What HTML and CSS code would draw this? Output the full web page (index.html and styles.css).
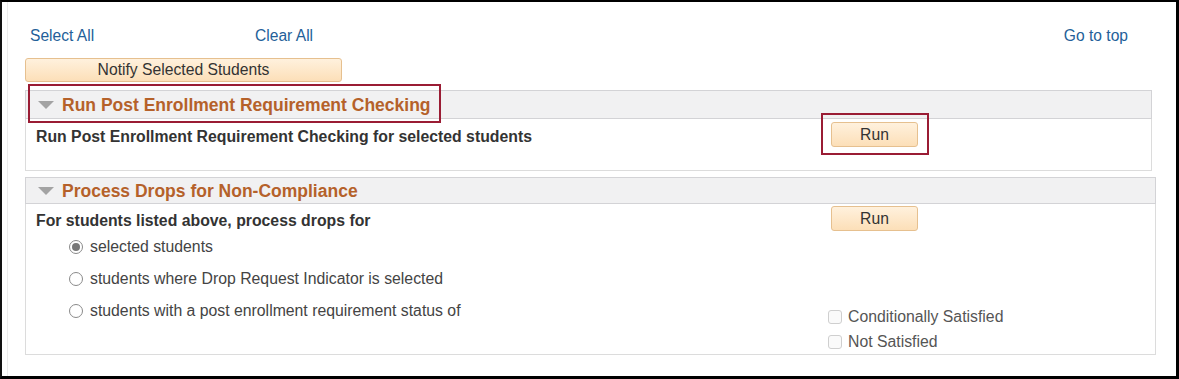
FILE: index.html
```html
<!DOCTYPE html>
<html lang="en">
<head>
<meta charset="utf-8">
<title>Post Enrollment Requirements</title>
<link rel="stylesheet" href="styles.css">
</head>
<body>
<div class="frame">
  <div class="page">
    <div class="links">
      <span class="link-cell"><a class="link" href="#">Select All</a></span>
      <a class="link" href="#">Clear All</a>
      <a class="link link-top" href="#">Go to top</a>
    </div>
    <button class="btn btn-notify" type="button">Notify Selected Students</button>

    <section class="group group-one">
      <div class="group-head">
        <span class="tri"></span>
        <h2 class="group-title">Run Post Enrollment Requirement Checking</h2>
      </div>
      <div class="group-body body-one">
        <div class="body-label">Run Post Enrollment Requirement Checking for selected students</div>
        <div class="right-col">
          <button class="btn btn-run" type="button">Run</button>
        </div>
      </div>
      <div class="mark mark-head"></div>
      <div class="mark mark-run"></div>
    </section>

    <section class="group group-two">
      <div class="group-head">
        <span class="tri"></span>
        <h2 class="group-title">Process Drops for Non-Compliance</h2>
      </div>
      <div class="group-body body-two">
        <div class="left-col">
          <div class="body-label">For students listed above, process drops for</div>
          <ul class="radios">
            <li class="radio-row"><span class="radio checked"></span><span class="opt">selected students</span></li>
            <li class="radio-row"><span class="radio"></span><span class="opt">students where Drop Request Indicator is selected</span></li>
            <li class="radio-row"><span class="radio"></span><span class="opt">students with a post enrollment requirement status of</span></li>
          </ul>
        </div>
        <div class="right-col right-two">
          <button class="btn btn-run" type="button">Run</button>
          <ul class="checks">
            <li class="check-row"><span class="check"></span><span class="opt">Conditionally Satisfied</span></li>
            <li class="check-row"><span class="check"></span><span class="opt">Not Satisfied</span></li>
          </ul>
        </div>
      </div>
    </section>
  </div>
</div>
</body>
</html>
```

FILE: styles.css
```css
* { box-sizing: border-box; }
html, body { margin: 0; padding: 0; background: #fff; }
body {
  font-family: "Liberation Sans", Arial, sans-serif;
  color: #333;
}
.frame {
  width: 1179px;
  height: 379px;
  border-top: 2px solid #000;
  border-left: 2px solid #111;
  border-right: 3px solid #000;
  border-bottom: 3px solid #000;
  overflow: hidden;
  box-shadow: inset 5px 0 0 #fff, inset 6px 0 0 #ececec;
}
.page {
  padding: 25px 0 0 23px;
}
.links {
  display: flex;
  align-items: center;
  width: 1103px;
  height: 18px;
  font-size: 15.6px;
  line-height: 18px;
}
.link-cell { width: 230px; padding-left: 5px; }
.link { color: #245f99; text-decoration: none; }
.link-top { margin-left: auto; }

.btn {
  font-family: "Liberation Sans", Arial, sans-serif;
  font-size: 15.7px;
  color: #333;
  background: linear-gradient(#fff1dd, #fcdfb8);
  border: 1px solid #e6c08f;
  border-radius: 3px;
  padding: 0;
  height: 25px;
  line-height: 22px;
  display: block;
}
.btn-notify {
  margin-top: 13px;
  width: 317px;
  height: 24px;
}
.btn-run { width: 87px; margin-left: 3px; }

.group { position: relative; width: 1127px; }
.group-one { margin-top: 8px; }
.group-two { margin-top: 6px; width: 1131px; }
.group-head {
  display: flex;
  align-items: center;
  height: 29px;
  background: #f1f1f2;
  border: 1px solid #d3d3d6;
  padding-left: 12px;
}
.group-two .group-head { height: 27px; }
.tri {
  width: 0; height: 0;
  border-left: 8px solid transparent;
  border-right: 8px solid transparent;
  border-top: 8px solid #a3a3a3;
  margin-right: 8px;
  margin-top: 1px;
}
.group-title {
  margin: 0;
  font-size: 17.5px;
  font-weight: bold;
  color: #b5612a;
  line-height: 20px;
}
.group-body {
  display: grid;
  grid-template-columns: 802px auto;
  border: 1px solid #dcdcdc;
  border-top: 0;
}
.body-label {
  font-size: 15.8px;
  font-weight: bold;
  color: #333;
  line-height: 18px;
  padding-left: 10px;
}
.body-one { height: 52px; }
.body-one .body-label { padding-top: 9px; }
.body-one .right-col { padding-top: 3px; }

.left-col { padding-top: 8px; padding-bottom: 27px; }
.right-two {
  display: flex;
  flex-direction: column;
  justify-content: space-between;
  padding-top: 2px;
}
.radios, .checks { list-style: none; margin: 0; padding: 0; }
.radios { padding-left: 43px; margin-top: 1px; }
.radio-row {
  display: flex;
  align-items: center;
  height: 32px;
}
.opt { font-size: 15.8px; color: #444; line-height: 18px; }
.radio {
  width: 14px; height: 14px;
  border: 1px solid #8a8a8a;
  border-radius: 50%;
  margin-right: 7px;
  display: flex;
  align-items: center;
  justify-content: center;
  background: #fff;
}
.radio.checked::after {
  content: "";
  width: 8px; height: 8px;
  border-radius: 50%;
  background: #777;
}
.check-row {
  display: flex;
  align-items: center;
  height: 25px;
}
.check {
  width: 14px; height: 14px;
  border: 1px solid #cfcfcf;
  border-radius: 3px;
  background: #fafafa;
  margin-right: 6px;
}
.checks .opt { color: #555; }

.mark {
  position: absolute;
  border: 2px solid #9a1c34;
  pointer-events: none;
}
.mark-head { left: 3px; top: -6px; width: 413px; height: 39px; }
.mark-run { left: 796px; top: 23px; width: 108px; height: 42px; }
```
